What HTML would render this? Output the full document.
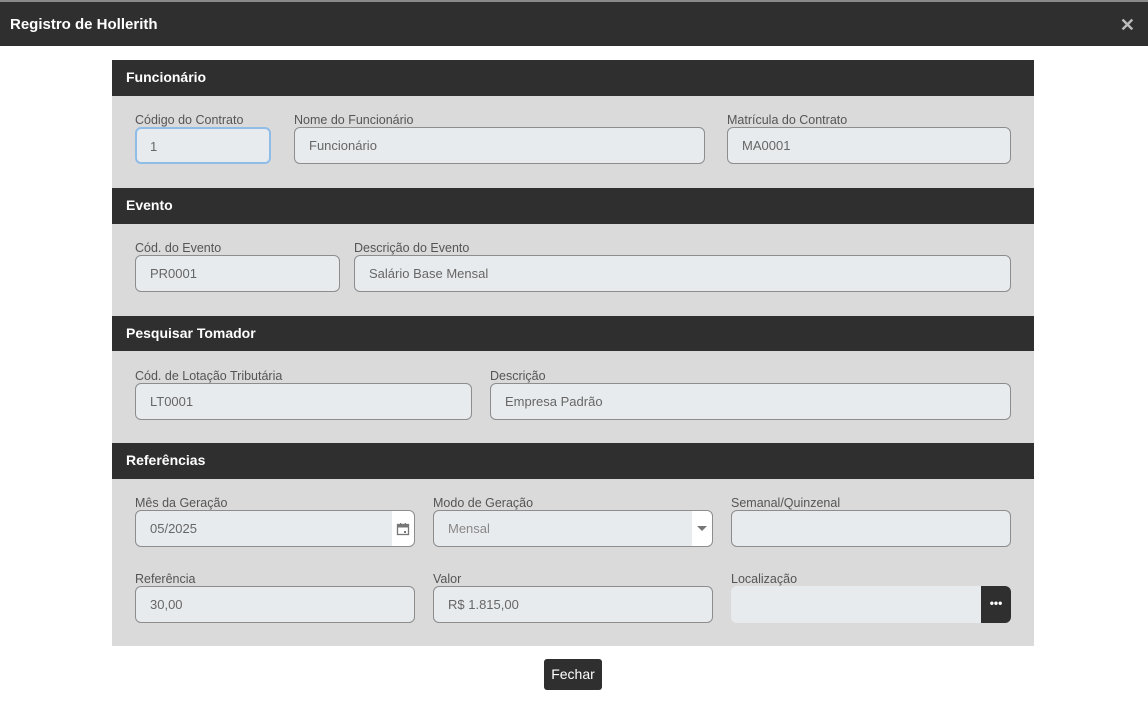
<!DOCTYPE html>
<html><head><meta charset="utf-8"><style>
*{box-sizing:border-box;margin:0;padding:0}
body{width:1148px;height:714px;background:#fff;font-family:"Liberation Sans",Arial,sans-serif;position:relative;overflow:hidden}
.top{position:absolute;left:0;top:0;width:1148px;height:2px;background:#8a8a8a}
.hdr{position:absolute;left:0;top:2px;width:1148px;height:44px;background:#2f2f2f;color:#fff;font-weight:bold;font-size:15px;line-height:46px;padding-left:10px}
.x{position:absolute;right:13px;top:0;font-size:18px;color:#bbb}
.sh{position:absolute;left:112px;width:922px;height:36px;background:#2f2f2f;color:#fff;font-weight:bold;font-size:14px;line-height:35px;padding-left:14px}
.sb{position:absolute;left:112px;width:922px;background:#dadada}
.l{position:absolute;font-size:12.5px;color:#555;margin-top:1px}
.i{position:absolute;height:37px;background:#e8ebee;border:1px solid #8d8d8d;border-radius:6px;font-size:13px;color:#666;line-height:35px;padding-left:14px}
.btn{position:absolute;left:544px;top:659px;width:58px;height:31px;background:#2f2f2f;border-radius:3px;color:#fff;font-size:14px;line-height:31px;text-align:center}
</style></head><body>
<div class="top"></div>
<div class="hdr">Registro de Hollerith<span class="x">✕</span></div>

<div class="sh" style="top:60px">Funcionário</div>
<div class="sb" style="top:96px;height:92px"></div>
<div class="l" style="left:135px;top:112px">Código do Contrato</div>
<div class="i" style="left:135px;top:127px;width:136px;border:2px solid #8fbde8;padding-left:13px">1</div>
<div class="l" style="left:294px;top:112px">Nome do Funcionário</div>
<div class="i" style="left:294px;top:127px;width:411px">Funcionário</div>
<div class="l" style="left:727px;top:112px">Matrícula do Contrato</div>
<div class="i" style="left:727px;top:127px;width:284px">MA0001</div>

<div class="sh" style="top:188px">Evento</div>
<div class="sb" style="top:224px;height:92px"></div>
<div class="l" style="left:135px;top:240px">Cód. do Evento</div>
<div class="i" style="left:135px;top:255px;width:205px">PR0001</div>
<div class="l" style="left:354px;top:240px">Descrição do Evento</div>
<div class="i" style="left:354px;top:255px;width:657px">Salário Base Mensal</div>

<div class="sh" style="top:316px;height:35px;line-height:34px">Pesquisar Tomador</div>
<div class="sb" style="top:351px;height:92px"></div>
<div class="l" style="left:135px;top:368px">Cód. de Lotação Tributária</div>
<div class="i" style="left:135px;top:383px;width:337px">LT0001</div>
<div class="l" style="left:490px;top:368px">Descrição</div>
<div class="i" style="left:490px;top:383px;width:521px">Empresa Padrão</div>

<div class="sh" style="top:443px">Referências</div>
<div class="sb" style="top:479px;height:167px"></div>
<div class="l" style="left:135px;top:495px">Mês da Geração</div>
<div class="i" style="left:135px;top:510px;width:280px;background:linear-gradient(90deg,#e8ebee 256px,#fff 256px)">05/2025
<svg style="position:absolute;right:4px;top:11px" width="14" height="14" viewBox="0 0 14 14"><rect x="1.5" y="2.5" width="11" height="10" fill="none" stroke="#777" stroke-width="1.3"/><rect x="1.5" y="2.5" width="11" height="3" fill="#777"/><rect x="8" y="9" width="2" height="2" fill="#777"/><rect x="4" y="1" width="1.3" height="2.5" fill="#777"/><rect x="8.7" y="1" width="1.3" height="2.5" fill="#777"/></svg></div>
<div class="l" style="left:433px;top:495px">Modo de Geração</div>
<div class="i" style="left:433px;top:510px;width:280px;background:linear-gradient(90deg,#e8ebee 258px,#fff 258px);color:#888">Mensal
<div style="position:absolute;right:5px;top:15px;border-left:5px solid transparent;border-right:5px solid transparent;border-top:5px solid #777"></div></div>
<div class="l" style="left:731px;top:495px">Semanal/Quinzenal</div>
<div class="i" style="left:731px;top:510px;width:280px"></div>

<div class="l" style="left:135px;top:571px">Referência</div>
<div class="i" style="left:135px;top:586px;width:280px">30,00</div>
<div class="l" style="left:433px;top:571px">Valor</div>
<div class="i" style="left:433px;top:586px;width:280px">R$ 1.815,00</div>
<div class="l" style="left:731px;top:571px">Localização</div>
<div class="i" style="left:731px;top:586px;width:280px;border:none;overflow:hidden"><div style="position:absolute;right:0;top:0;width:30px;height:37px;background:#2f2f2f;color:#fff;font-size:12px;font-weight:bold;text-align:center;line-height:34px">•••</div></div>

<div class="btn">Fechar</div>
</body></html>
